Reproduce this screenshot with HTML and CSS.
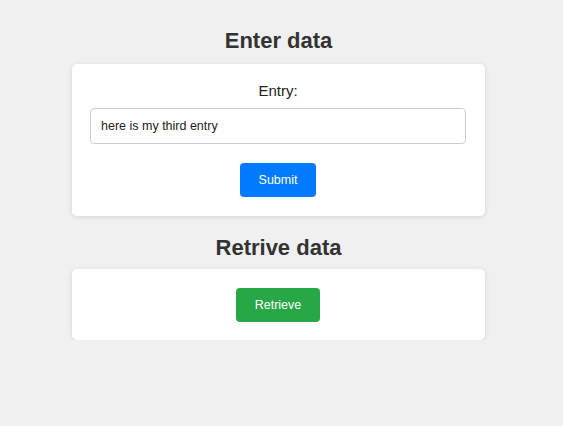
FILE: index.html
```html
<!DOCTYPE html>
<html>
<head>
<meta charset="utf-8">
<link rel="stylesheet" href="styles.css">
</head>
<body>
<main class="wrap">
  <h2 class="title">Enter data</h2>
  <section class="card">
    <label class="label" for="entry">Entry:</label>
    <input class="field" id="entry" type="text" value="here is my third entry">
    <button class="btn btn-blue">Submit</button>
  </section>
  <h2 class="title title-2">Retrive data</h2>
  <section class="card card-2">
    <button class="btn btn-green">Retrieve</button>
  </section>
</main>
</body>
</html>
```
FILE: styles.css
```css
html, body {
  margin: 0;
  padding: 0;
  background: #f0f0f0;
  font-family: "Liberation Sans", Arial, sans-serif;
  color: #333;
}
.wrap {
  width: 413px;
  margin-left: 72px;
  padding-top: 28px;
  display: flex;
  flex-direction: column;
}
.title {
  margin: 0 0 11px;
  font-size: 22px;
  font-weight: bold;
  text-align: center;
  line-height: 25px;
  color: #333;
}
.title-2 {
  margin-top: 19px;
  margin-bottom: 9px;
}
.card {
  background: #fff;
  border-radius: 5px;
  box-shadow: 0 1px 5px rgba(0,0,0,0.12);
  padding: 18px 19px 19px 18px;
  display: flex;
  flex-direction: column;
  align-items: center;
}
.card-2 {
  padding-top: 19px;
  padding-bottom: 18px;
}
.label {
  font-size: 15px;
  line-height: 17px;
  color: #222;
  margin-bottom: 9px;
}
.field {
  box-sizing: border-box;
  width: 100%;
  height: 36px;
  border: 1px solid #ccc;
  border-radius: 4px;
  padding: 0 10px;
  font-family: "Liberation Sans", Arial, sans-serif;
  font-size: 12.5px;
  color: #222;
  background: #fff;
  outline: none;
  margin: 0 0 19px;
}
.btn {
  border: none;
  border-radius: 4px;
  color: #fff;
  font-family: "Liberation Sans", Arial, sans-serif;
  font-size: 12.5px;
  height: 34px;
  padding: 0;
}
.btn-blue {
  background: #007bff;
  width: 76px;
}
.btn-green {
  background: #28a745;
  width: 84px;
}
```
